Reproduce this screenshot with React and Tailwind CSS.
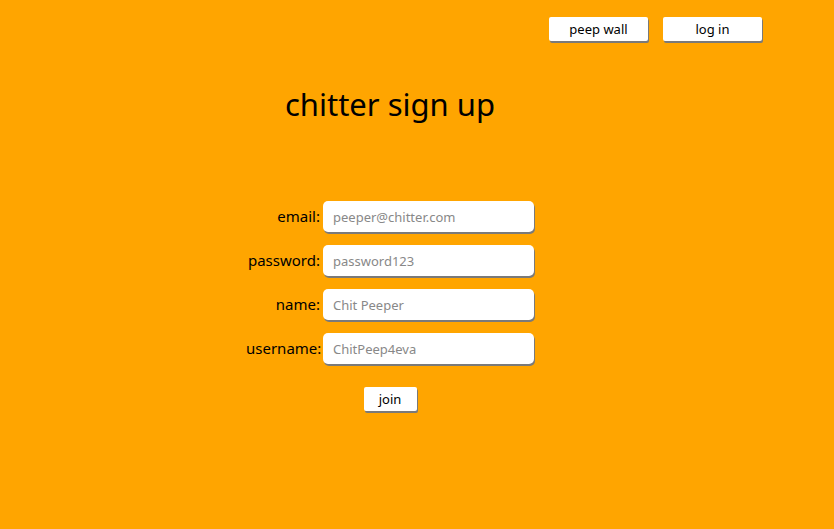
export default function App() {
  const rows = [
    ["email:", "peeper@chitter.com", "email"],
    ["password:", "password123", "password"],
    ["name:", "Chit Peeper", "text"],
    ["username:", "ChitPeep4eva", "text"],
  ];
  return (
    <div className="min-h-[529px] w-full bg-[#ffa500] text-black" style={{ fontFamily: "'Noto Sans', 'Open Sans', sans-serif" }}>
      <div className="w-[780px]">
        <div className="flex justify-end gap-[15px] pr-[18px] pt-[17px]">
          <button className="h-[24px] w-[99px] rounded-[2px] bg-white pt-[1px] text-[13px] shadow-[1px_2px_0_#7a7a7a]">peep wall</button>
          <button className="h-[24px] w-[99px] rounded-[2px] bg-white pt-[1px] text-[13px] shadow-[1px_2px_0_#7a7a7a]">log in</button>
        </div>
        <h1 className="mt-[43px] text-center text-[31px] leading-[40px]">chitter sign up</h1>
        <form className="mt-[77px] flex flex-col items-center gap-[13px]" onSubmit={(e) => e.preventDefault()}>
          {rows.map(([label, ph, type]) => (
            <div key={label} className="flex items-center">
              <label className="w-[77px] pr-[3px] text-right text-[15px]">{label}</label>
              <input
                type={type}
                placeholder={ph}
                className="h-[31px] w-[211px] rounded-[5px] bg-white pl-[10px] text-[13px] outline-none shadow-[1px_2px_0_#7a7a7a] placeholder:text-[#888]"
              />
            </div>
          ))}
          <button className="mt-[10px] h-[24px] w-[53px] rounded-[2px] bg-white pt-[1px] text-[13px] shadow-[1px_2px_0_#7a7a7a]">join</button>
        </form>
      </div>
    </div>
  );
}
